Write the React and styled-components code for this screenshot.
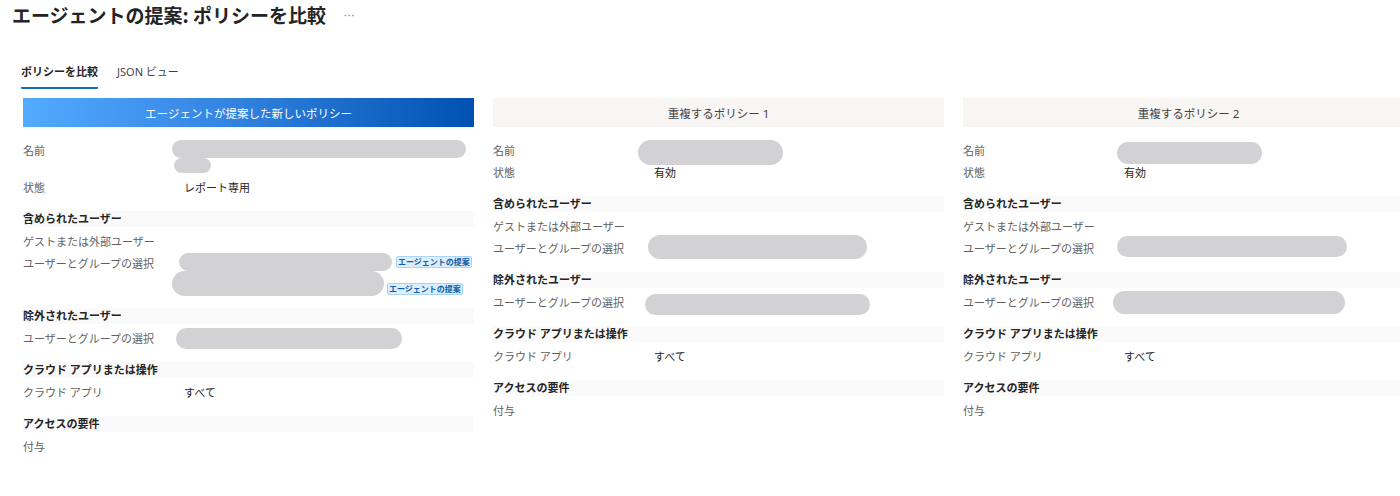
import React from "react";
import styled, { createGlobalStyle } from "styled-components";

const GlobalStyle = createGlobalStyle`
  body {
    margin: 0;
    overflow: hidden;
    background: #ffffff;
    font-family: "Noto Sans", "Noto Sans CJK JP", sans-serif;
    color: #242424;
  }
`;

// Cabecera de la pagina
const Header = styled.div`
  display: flex;
  align-items: center;
  height: 22px;
  padding: 4px 12px 0;
`;

const Title = styled.h1`
  margin: 0;
  font-size: 19px;
  line-height: 22px;
  font-weight: 700;
  color: #242424;
  font-family: "Noto Sans CJK JP", sans-serif;
`;

const More = styled.span`
  margin-left: 18px;
  font-size: 10px;
  line-height: 10px;
  color: #707070;
  letter-spacing: 1px;
`;

const Tabs = styled.div`
  display: flex;
  gap: 19px;
  margin-top: 38px;
  padding-left: 21px;
`;

const Tab = styled.div`
  font-size: 11px;
  line-height: 16px;
  padding-bottom: 7px;
  font-weight: ${(p) => (p.$active ? 700 : 400)};
  color: ${(p) => (p.$active ? "#242424" : "#424242")};
  border-bottom: 2px solid ${(p) => (p.$active ? "#0f6cbd" : "transparent")};
  border-radius: 1px;
`;

const Columns = styled.div`
  display: flex;
  gap: 19px;
  margin-top: 9px;
  padding-left: 23px;
`;

const Column = styled.div`
  width: 451px;
  flex-shrink: 0;
`;

const ColumnHead = styled.div`
  height: 29px;
  display: flex;
  align-items: center;
  justify-content: center;
  font-size: 11.5px;
  background: ${(p) =>
    p.$agent
      ? "linear-gradient(90deg, #52abff 0%, #3484e2 45%, #0051b1 100%)"
      : "#f7f6f5"};
  color: ${(p) => (p.$agent ? "#ffffff" : "#424242")};
`;

const Body = styled.div`
  padding-top: 13px;
`;

const Section = styled.div`
  margin-top: 12px;
  margin-bottom: 4px;
  height: 16px;
  line-height: 16px;
  font-size: 11px;
  font-weight: 700;
  background: #fafafa;
  color: #242424;
`;

const Row = styled.div`
  display: grid;
  grid-template-columns: 161px 1fr;
  align-items: start;
  padding-bottom: ${(p) => p.$pb || 0}px;
`;

const Label = styled.div`
  font-size: 11px;
  line-height: 22px;
  color: #616161;
`;

const Value = styled.div`
  display: flex;
  flex-direction: column;
  font-size: 11px;
  line-height: 22px;
  color: #242424;
`;

const ValueLine = styled.div`
  display: flex;
  align-items: ${(p) => p.$align || "center"};
`;

// Marca gris que tapa los datos
const Redact = styled.div`
  flex-shrink: 0;
  width: ${(p) => p.$w}px;
  height: ${(p) => p.$h}px;
  margin: ${(p) => p.$mt || 0}px 0 ${(p) => p.$mb || 0}px ${(p) => p.$ml || 0}px;
  background: #d2d2d4;
  border-radius: ${(p) => p.$h / 2}px;
`;

const Tag = styled.span`
  margin-left: ${(p) => p.$ml}px;
  margin-bottom: ${(p) => p.$mb || 0}px;
  padding: 0 1px;
  font-size: 8px;
  line-height: 10px;
  font-weight: 700;
  font-family: "Noto Sans CJK JP", sans-serif;
  color: #115ea3;
  background: #dbeeff;
  border: 1px solid #a9d3f5;
  border-radius: 2px;
  white-space: nowrap;
`;

const Field = ({ label, children, pb }) => (
  <Row $pb={pb}>
    <Label>{label}</Label>
    <Value>{children}</Value>
  </Row>
);

const AgentColumn = () => (
  <Column>
    <ColumnHead $agent>エージェントが提案した新しいポリシー</ColumnHead>
    <Body>
      <Field label="名前" pb={4}>
        <Redact $w={294} $h={18} $ml={-12} />
        <Redact $w={37} $h={15} $ml={-10} />
      </Field>
      <Field label="状態">レポート専用</Field>
      <Section>含められたユーザー</Section>
      <Field label="ゲストまたは外部ユーザー" />
      <Field label="ユーザーとグループの選択">
        <ValueLine>
          <Redact $w={213} $h={18} $ml={-5} />
          <Tag $ml={4}>エージェントの提案</Tag>
        </ValueLine>
        <ValueLine $align="flex-end">
          <Redact $w={212} $h={25} $ml={-12} />
          <Tag $ml={3} $mb={1}>エージェントの提案</Tag>
        </ValueLine>
      </Field>
      <Section>除外されたユーザー</Section>
      <Field label="ユーザーとグループの選択">
        <Redact $w={226} $h={21} $ml={-8} $mb={1} />
      </Field>
      <Section>クラウド アプリまたは操作</Section>
      <Field label="クラウド アプリ">すべて</Field>
      <Section>アクセスの要件</Section>
      <Field label="付与" />
    </Body>
  </Column>
);

const duplicates = [
  {
    title: "重複するポリシー 1",
    name: { w: 145, h: 25, ml: -16, mt: 0, mb: -3 },
    users: { w: 219, h: 24, ml: -6, mt: -3, mb: 1 },
    excluded: { w: 225, h: 21, ml: -9, mt: 2, mb: -1 },
  },
  {
    title: "重複するポリシー 2",
    name: { w: 145, h: 22, ml: -7, mt: 2, mb: -2 },
    users: { w: 230, h: 21, ml: -7, mt: -2, mb: 3 },
    excluded: { w: 232, h: 23, ml: -11, mt: -1, mb: 0 },
  },
];

const mark = (m) => <Redact $w={m.w} $h={m.h} $ml={m.ml} $mt={m.mt} $mb={m.mb} />;

const DuplicateColumn = ({ data }) => (
  <Column>
    <ColumnHead>{data.title}</ColumnHead>
    <Body>
      <Field label="名前">{mark(data.name)}</Field>
      <Field label="状態">有効</Field>
      <Section>含められたユーザー</Section>
      <Field label="ゲストまたは外部ユーザー" />
      <Field label="ユーザーとグループの選択">{mark(data.users)}</Field>
      <Section>除外されたユーザー</Section>
      <Field label="ユーザーとグループの選択">{mark(data.excluded)}</Field>
      <Section>クラウド アプリまたは操作</Section>
      <Field label="クラウド アプリ">すべて</Field>
      <Section>アクセスの要件</Section>
      <Field label="付与" />
    </Body>
  </Column>
);

const App = () => (
  <>
    <GlobalStyle />
    <Header>
      <Title>エージェントの提案: ポリシーを比較</Title>
      <More>···</More>
    </Header>
    <Tabs>
      <Tab $active>ポリシーを比較</Tab>
      <Tab>JSON ビュー</Tab>
    </Tabs>
    <Columns>
      <AgentColumn />
      {duplicates.map((d) => (
        <DuplicateColumn key={d.title} data={d} />
      ))}
    </Columns>
  </>
);

export default App;
